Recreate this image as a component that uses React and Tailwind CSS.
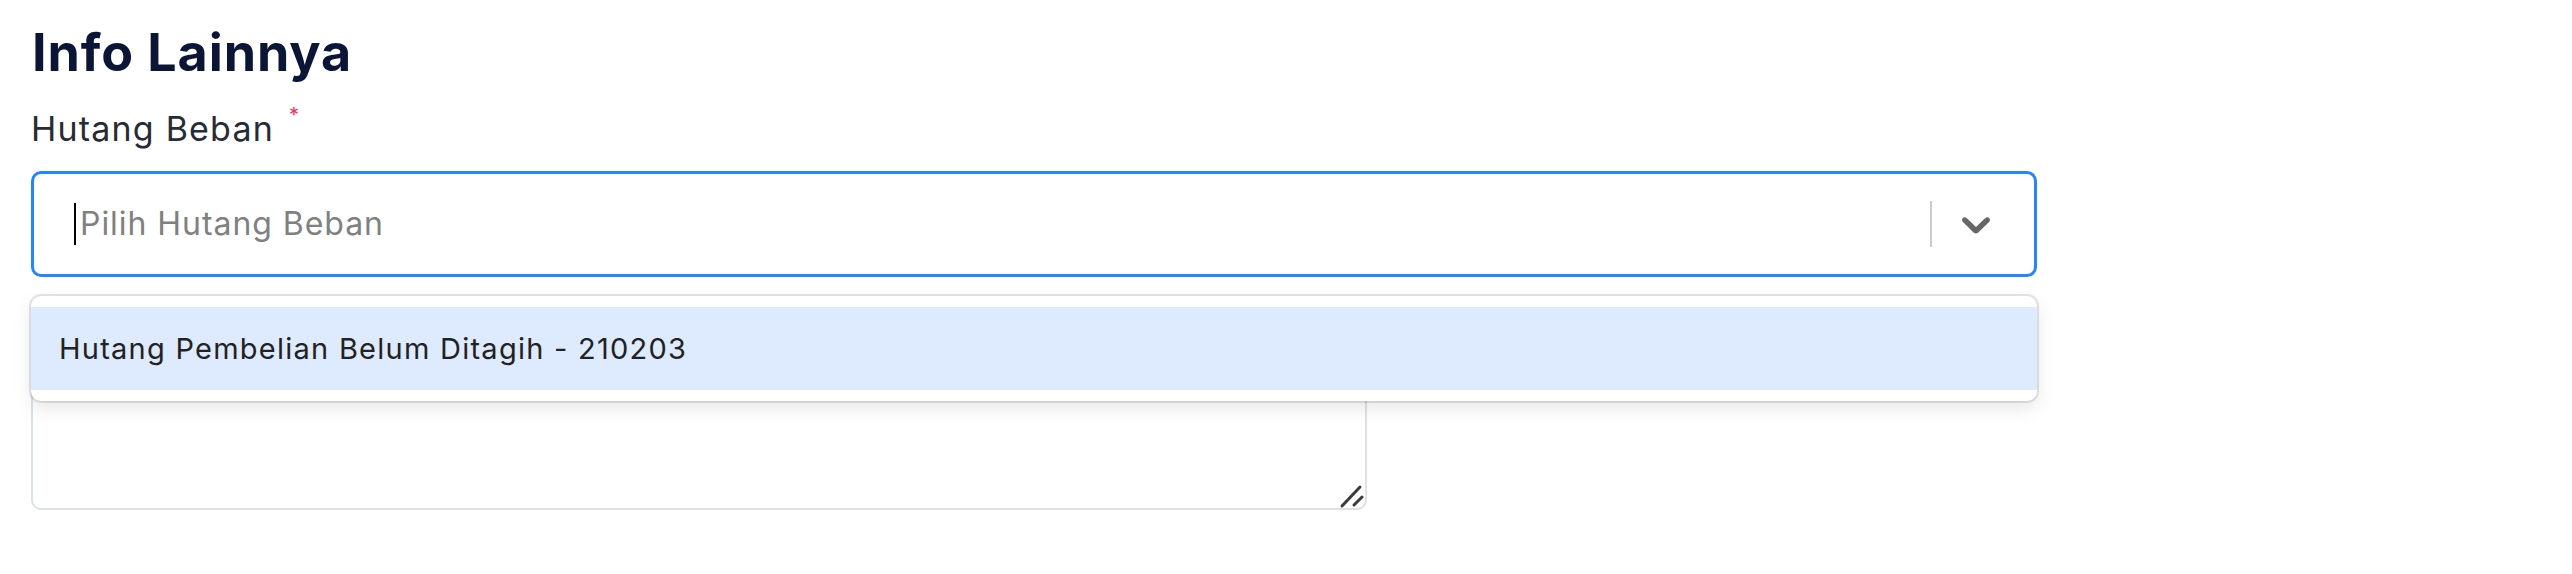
import React from 'react';

const Chevron = () => (
  <svg viewBox="0 0 20 20" className="w-[48px] h-[48px] fill-[#666666]" aria-hidden="true">
    <path d="M4.516 7.548c0.436-0.446 1.043-0.481 1.576 0l3.908 3.747 3.908-3.747c0.533-0.481 1.141-0.446 1.574 0 0.436 0.445 0.408 1.197 0 1.615-0.406 0.418-4.695 4.502-4.695 4.502-0.217 0.223-0.502 0.335-0.787 0.335s-0.57-0.112-0.789-0.335c0 0-4.287-4.084-4.695-4.502s-0.436-1.17 0-1.615z" />
  </svg>
);

const ResizeGrip = () => (
  <svg viewBox="0 0 30 30" className="absolute right-0 bottom-0 w-[30px] h-[30px]" aria-hidden="true">
    <line x1="23" y1="7" x2="5" y2="26" stroke="#3a3a3a" strokeWidth="3" strokeLinecap="round" />
    <line x1="25" y1="17" x2="17" y2="25" stroke="#3a3a3a" strokeWidth="3" strokeLinecap="round" />
  </svg>
);

const App = () => {
  const options = ['Hutang Pembelian Belum Ditagih - 210203'];

  return (
    <div className="min-h-screen bg-white pl-[31px] pt-[22px] font-['Inter','Noto_Sans',sans-serif]">
      <h2 className="text-[52px] leading-[62px] font-bold tracking-[0.9px] text-[#0b1536] pl-[1px]">Info Lainnya</h2>

      {/* Hutang Beban select */}
      <div className="mt-[20px] w-[2006px]">
        <label className="block text-[34px] leading-[49px] tracking-[1.2px] text-[#262b36]">
          Hutang Beban
          <span className="relative top-[1px] ml-[15px] inline-block align-top text-[20px] leading-none text-[#ff2d55]">*</span>
        </label>

        <div className="relative mt-[18px]">
          <div className="flex h-[106px] items-center rounded-[10px] border-[3px] border-[#2684ff] bg-white pl-[40px] pr-[34px]">
            <span className="h-[42px] w-[2px] bg-black" />
            <span className="ml-[4px] text-[32px] tracking-[0.95px] text-[#808080]">Pilih Hutang Beban</span>
            <div className="flex-1" />
            <span className="h-[46px] w-[2px] bg-[#cccccc]" />
            <div className="ml-[20px] flex items-center">
              <Chevron />
            </div>
          </div>

          {/* Dropdown menu */}
          <div className="absolute left-0 right-0 top-[calc(100%+19px)] z-10 rounded-[10px] bg-white py-[11px] shadow-[0_0_0_2px_rgba(0,0,0,0.1),0_7px_19px_rgba(0,0,0,0.1)]">
            {options.map((opt) => (
              <div
                key={opt}
                className="flex h-[83px] items-center bg-[#deebff] px-[28px] text-[29px] tracking-[1.25px] text-[#222222]"
              >
                {opt}
              </div>
            ))}
          </div>
        </div>
      </div>

      {/* Textarea behind the menu */}
      <div className="relative mt-[58px] h-[175px] w-[1336px]">
        <textarea className="h-full w-full resize-none rounded-[10px] border-2 border-[#dde1ea] bg-white outline-none" />
        <ResizeGrip />
      </div>
    </div>
  );
};

export default App;
